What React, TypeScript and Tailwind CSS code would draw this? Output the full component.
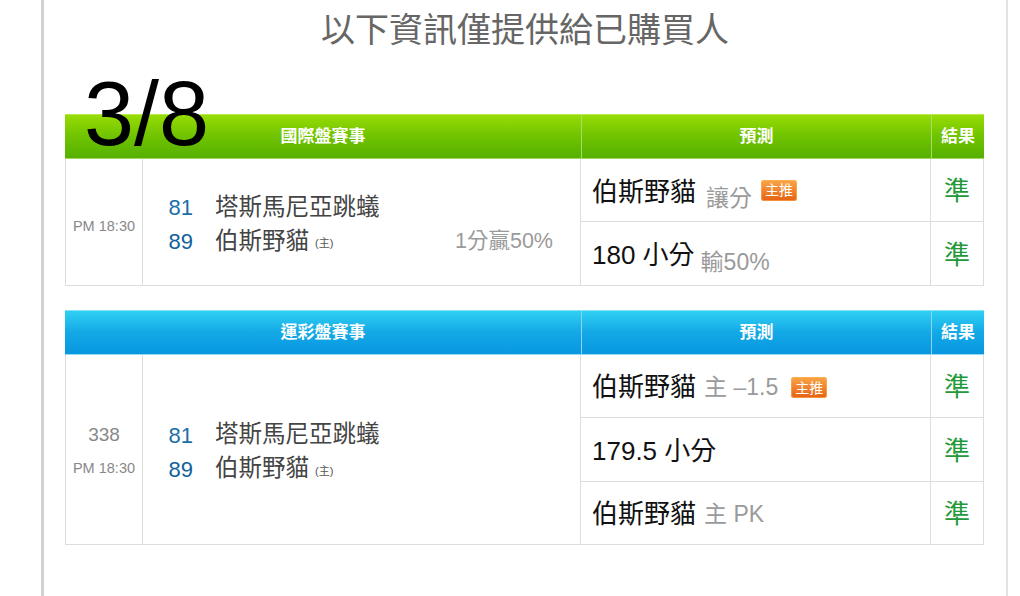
import React from "react";

const F = "font-['Liberation_Sans','Noto_Sans_CJK_TC',sans-serif]";

function Badge({ className = "" }: { className?: string }) {
  return (
    <span
      className={`inline-flex h-[21px] w-[36px] items-center justify-center rounded-[3px] bg-linear-to-b from-[#f9a646] to-[#e55f0d] text-[14px] leading-none text-white shadow-[inset_0_0_0_1px_rgba(255,180,90,0.6)] ${className}`}
    >
      主推
    </span>
  );
}

function Result() {
  return (
    <div className="flex items-center justify-center border-r border-b border-[#dddddd] pt-[3px] text-[26px] text-[#23993a]">
      準
    </div>
  );
}

function Header({ title, blue }: { title: string; blue?: boolean }) {
  const bg = blue
    ? "bg-linear-to-b from-[#2fd0f3] via-[#13a8e6] to-[#0897e0] border-t border-t-[#86e2f7] border-b border-b-[#9ad9f4]"
    : "bg-linear-to-b from-[#97dc05] via-[#6fc300] to-[#55b000] border-t border-t-[#b6ea4c] border-b border-b-[#9fd85a]";
  const div = blue ? "border-l border-l-[#8fd3f2]" : "border-l border-l-[#a8dc6a]";
  return (
    <>
      <div className={`col-span-2 flex items-center justify-center text-[17px] font-bold text-white ${bg}`}>{title}</div>
      <div className={`flex items-center justify-center text-[17px] font-bold text-white ${bg} ${div}`}>預測</div>
      <div className={`flex items-center justify-center text-[17px] font-bold text-white ${bg} ${div}`}>結果</div>
    </>
  );
}

function Teams({ odds }: { odds?: string }) {
  return (
    <div className="flex flex-col justify-center border-r border-b border-[#dddddd] pt-[5px]">
      <div className="flex h-[34px] items-center">
        <span className="w-[50px] text-right text-[22px] text-[#1b6fa8]">81</span>
        <span className="ml-[22px] text-[23.5px] text-[#444444]">塔斯馬尼亞跳蟻</span>
      </div>
      <div className="flex h-[34px] items-center">
        <span className="w-[50px] text-right text-[22px] font-medium text-[#12619b]">89</span>
        <span className="ml-[22px] text-[23.5px] text-[#444444]">伯斯野貓</span>
        <span className="ml-[6px] mt-[4px] text-[11px] text-[#555555]">(主)</span>
        {odds && <span className="ml-auto mr-[27px] text-[21.5px] text-[#9a9a9a]">{odds}</span>}
      </div>
    </div>
  );
}

export default function App() {
  return (
    <div className={`h-[596px] w-[1020px] overflow-hidden bg-white ${F}`}>
      <div className="ml-[41px] h-full w-[967px] border-l-[3px] border-r-2 border-l-[#d2d2d2] border-r-[#e2e2e2] px-[21px]">
        <div className="pt-[8px] text-center text-[34px] leading-[44px] text-[#666666]">以下資訊僅提供給已購買人</div>

        {/* Table 1 */}
        <div className="relative mt-[62px]">
          <div className="pointer-events-none absolute left-[19px] top-[-45px] z-10 text-[90px] leading-[90px] text-black">3/8</div>
          <div className="grid grid-cols-[78px_438px_350px_53px] grid-rows-[45px_63px_64px]">
            <Header title="國際盤賽事" />
            <div className="row-span-2 flex items-center justify-center border-x border-b border-[#dddddd] pt-[10px] text-[14.5px] text-[#888888]">
              PM 18:30
            </div>
            <div className="row-span-2 grid">
              <Teams odds="1分贏50%" />
            </div>
            <div className="flex items-center border-r border-b border-[#dddddd] pl-[11px] pt-[4px]">
              <span className="text-[26px] text-[#111111]">伯斯野貓</span>
              <span className="relative top-[6px] ml-[10px] text-[23px] text-[#9a9a9a]">讓分</span>
              <Badge className="ml-[9px] -mt-[4px]" />
            </div>
            <Result />
            <div className="flex items-center border-r border-b border-[#dddddd] pl-[11px] pt-[3px]">
              <span className="text-[26px] text-[#111111]">180 小分</span>
              <span className="relative top-[7px] ml-[6px] text-[23px] text-[#9a9a9a]">輸50%</span>
            </div>
            <Result />
          </div>
        </div>

        {/* Table 2 */}
        <div className="mt-[24px] grid grid-cols-[78px_438px_350px_53px] grid-rows-[45px_63px_64px_63px]">
          <Header title="運彩盤賽事" blue />
          <div className="row-span-3 flex flex-col items-center justify-center border-x border-b border-[#dddddd] pt-[5px] text-[#888888]">
            <div className="flex h-[33px] items-center text-[19px]">338</div>
            <div className="flex h-[33px] items-center text-[14.5px]">PM 18:30</div>
          </div>
          <div className="row-span-3 grid">
            <Teams />
          </div>
          <div className="flex items-center border-r border-b border-[#dddddd] pl-[11px] pt-[3px]">
            <span className="text-[26px] text-[#111111]">伯斯野貓</span>
            <span className="ml-[8px] text-[23px] text-[#9a9a9a]">主 –1.5</span>
            <Badge className="ml-[13px]" />
          </div>
          <Result />
          <div className="flex items-center border-r border-b border-[#dddddd] pl-[11px] pt-[3px]">
            <span className="text-[26px] text-[#111111]">179.5 小分</span>
          </div>
          <Result />
          <div className="flex items-center border-r border-b border-[#dddddd] pl-[11px] pt-[3px]">
            <span className="text-[26px] text-[#111111]">伯斯野貓</span>
            <span className="ml-[8px] text-[23px] text-[#9a9a9a]">主 PK</span>
          </div>
          <Result />
        </div>
      </div>
    </div>
  );
}
